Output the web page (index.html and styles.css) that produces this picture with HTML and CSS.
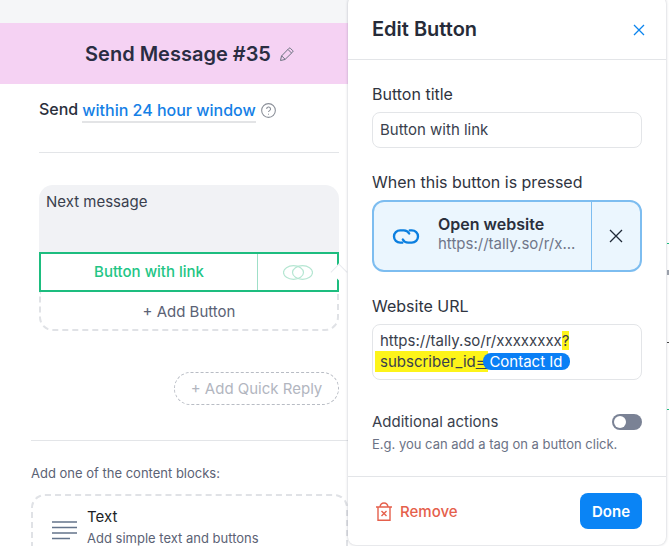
FILE: index.html
```html
<!DOCTYPE html>
<html lang="en">
<head>
<meta charset="utf-8">
<title>Edit Button</title>
<link rel="stylesheet" href="styles.css">
</head>
<body>
<div class="stage">
  <main class="builder">
    <div class="topbar"></div>
    <header class="node-head">
      <h1>Send Message #35</h1>
      <svg class="pencil" width="16" height="16" viewBox="0 0 16 16" fill="none" stroke="#6b7280" stroke-width="1"><path d="M1.500 14.500l1-4.500 7.500-7.700a1 1 0 0 1 1.400 0l2.300 2.300a1 1 0 0 1 0 1.400L6 13.500z"/><path d="M9 3.500l3.500 3.500M2.800 10l3.200 3.200"/></svg>
    </header>
    <section class="send-section">
      <div class="send-row">
        <span>Send</span>
        <span class="send-link">within 24 hour window</span>
        <svg width="15" height="15" viewBox="0 0 14 14" fill="none" stroke="#8a8f98"><circle cx="7" cy="7" r="6.400"/><path d="M5.300 5.600a1.800 1.800 0 1 1 2.700 1.500c-.6.4-1 .7-1 1.400"/><path d="M7 10v.9"/></svg>
      </div>
      <div class="rule"></div>
      <div class="msg-card">
        <div class="msg-text">Next message</div>
        <div class="msg-button">
          <div class="msg-button-title">Button with link</div>
          <div class="msg-button-icon">
            <svg width="30" height="15" viewBox="0 0 30 15" fill="none" stroke="#b5e6d2" stroke-width="1.200"><ellipse cx="10.500" cy="7.500" rx="10" ry="6.800"/><ellipse cx="19.500" cy="7.500" rx="10" ry="6.800"/></svg>
          </div>
          <span class="notch"></span>
        </div>
        <div class="add-button">+ Add Button</div>
      </div>
      <div class="quick-row"><div class="quick">+ Add Quick Reply</div></div>
    </section>
    <section class="blocks">
      <div class="blocks-label">Add one of the content blocks:</div>
      <div class="block-card">
        <svg class="block-icon" width="26" height="22" viewBox="0 0 26 22" fill="none" stroke="#64748b" stroke-width="1.600"><path d="M0 2h25M0 7.500h25M0 13h25M0 18.500h18"/></svg>
        <div>
          <div class="block-title">Text</div>
          <div class="block-sub">Add simple text and buttons</div>
        </div>
      </div>
    </section>
  </main>

  <aside class="panel">
    <div class="panel-head">
      <h2>Edit Button</h2>
      <svg width="12" height="12" viewBox="0 0 12 12" stroke="#0b84ee" stroke-width="1.300" fill="none"><path d="M1 1l10 10M11 1L1 11"/></svg>
    </div>
    <div class="panel-body">
      <label class="field-label">Button title</label>
      <div class="input">Button with link</div>
      <label class="field-label gap-when">When this button is pressed</label>
      <div class="action">
        <div class="action-icon">
          <svg width="28" height="17" viewBox="0 0 26 16" fill="none" stroke="#0b7fe0" stroke-width="2.200" stroke-linecap="round"><path d="M9.500 13.800H7.500a5.800 5.800 0 0 1 0-11.600h3.500a5.800 5.800 0 0 1 5 3"/><path d="M16.500 2.200h2a5.800 5.800 0 0 1 0 11.600H15a5.800 5.800 0 0 1-5-3"/></svg>
        </div>
        <div class="action-text">
          <div class="action-title">Open website</div>
          <div class="action-url">https://tally.so/r/x...</div>
        </div>
        <div class="action-close">
          <svg width="14" height="14" viewBox="0 0 14 14" fill="none" stroke="#1f2937" stroke-width="1.300"><path d="M1 1l12 12M13 1L1 13"/></svg>
        </div>
      </div>
      <label class="field-label gap-url">Website URL</label>
      <div class="url-box">
        <div>https://tally.so/r/xxxxxxxx<mark>?</mark></div>
        <div class="url-line2"><mark>subscriber_id<u>=&#8201;</u></mark><span class="chip">Contact Id</span></div>
      </div>
      <div class="toggle-row">
        <span>Additional actions</span>
        <span class="toggle"><i></i></span>
      </div>
      <div class="hint">E.g. you can add a tag on a button click.</div>
    </div>
    <div class="panel-foot">
      <div class="remove">
        <svg width="16" height="19" viewBox="0 0 16 19" fill="none" stroke="#e5604c" stroke-width="1.400"><path d="M0 5h16M2 5v13.300h12V5"/><path d="M4 5c.3-2.200 1.500-4 4-4s3.700 1.800 4 4"/><path d="M5.500 9l5 5M10.500 9l-5 5"/></svg>
        <span>Remove</span>
      </div>
      <div class="done">Done</div>
    </div>
  </aside>
  <span class="edge edge-a"></span>
  <span class="edge edge-b"></span>
  <span class="edge edge-c"></span>
  <span class="edge edge-d"></span>
</div>
</body>
</html>
```
FILE: styles.css
```css
* { box-sizing: border-box; }
html, body { margin: 0; padding: 0; background: #fff; }
body { font-family: Inter, "Liberation Sans", sans-serif; color: #2a2f3c; }
.stage { position: relative; width: 669px; height: 546px; overflow: hidden; background: #fff; }
.builder { width: 348px; height: 546px; overflow: hidden; }
.topbar { height: 23px; background: #f5f6f8; }
.node-head { height: 61px; background: #f5d2f3; display: flex; align-items: center; justify-content: center; gap: 8px; padding-left: 32px; }
.node-head h1 { margin: 0; font-size: 20px; font-weight: 600; color: #2a2d42; line-height: 24px; }
.send-section { padding: 0 9px 0 39px; }
.send-row { display: flex; align-items: center; gap: 4px; height: 30px; margin-top: 10px; font-size: 16px; font-weight: 500; color: #2a2f3c; }
.send-link { color: #1580e6; border-bottom: 2px solid #e3e4e6; line-height: 22px; margin-top: 3px; margin-right: 1px; }
.send-row svg { margin-top: 3px; }
.rule { height: 1px; background: #e3e5e8; margin-top: 28px; }
.msg-card { margin-top: 32px; }
.msg-text { height: 67px; background: #f1f2f5; border-radius: 14px 14px 0 0; padding: 8px 7px; font-size: 15px; line-height: 17px; color: #3a3f4d; }
.msg-button { position: relative; display: flex; height: 40px; border: 2px solid #1dbd7f; background: #fff; }
.msg-button-title { flex: 1; display: flex; align-items: center; justify-content: center; font-size: 15px; font-weight: 500; color: #22c585; padding-bottom: 1px; }
.msg-button-icon { width: 80px; border-left: 1px solid #9fdfc8; display: flex; align-items: center; justify-content: center; }
.notch { position: absolute; right: -8px; top: 12px; width: 12px; height: 12px; background: #fff; transform: rotate(45deg); border: 1px solid #e8eaee; border-width: 1px 0 0 1px; }
.add-button { height: 39px; padding-top: 2px; border: 2px dashed #e0e2e6; border-top: 0; border-radius: 0 0 14px 14px; display: flex; align-items: center; justify-content: center; font-size: 15px; color: #5b6275; }
.quick-row { display: flex; justify-content: flex-end; margin-top: 41px; }
.quick { width: 165px; height: 33px; border: 1px dashed #b8bcc4; border-radius: 17px; display: flex; align-items: center; justify-content: center; font-size: 15px; color: #b2b6bf; }
.blocks { margin: 35px 0 0 31px; border-top: 1px solid #e3e5e8; padding-top: 24px; }
.blocks-label { font-size: 13px; line-height: 17px; color: #5b6275; }
.block-card { margin-top: 12px; height: 70px; border: 2px dashed #e0e2e6; border-radius: 14px; display: flex; gap: 9px; padding: 12px 0 0 19px; }
.block-icon { margin-top: 12px; flex: none; }
.block-title { font-size: 15px; line-height: 17px; color: #1c1f26; }
.block-sub { font-size: 13px; line-height: 16px; margin-top: 5px; color: #5b6275; }

.panel { position: absolute; left: 348px; top: -4px; width: 318px; height: 549px; background: #fff; border-radius: 8px; box-shadow: 0 0 3px rgba(30,40,60,.28); display: flex; flex-direction: column; }
.panel-head { height: 64px; padding: 4px 21px 0 24px; display: flex; align-items: center; justify-content: space-between; border-bottom: 1px solid #e3e5e8; }
.panel-head h2 { margin: 0 0 2px; font-size: 20px; font-weight: 600; color: #262b38; }
.panel-body { flex: 1; padding: 24px 24px 0; }
.field-label { display: block; font-size: 16px; line-height: 20px; color: #2f3440; }
.input { margin-top: 8px; height: 36px; border: 1px solid #e3e5e8; border-radius: 8px; padding: 0 7px 2px; display: flex; align-items: center; font-size: 15px; color: #3a3f4d; }
.gap-when { margin-top: 24px; }
.action { margin-top: 8px; height: 72px; display: flex; background: #ebf6fe; border: 2px solid #7dbdf0; border-radius: 12px; }
.action-icon { width: 64px; display: flex; align-items: center; justify-content: center; }
.action-text { flex: 1; display: flex; flex-direction: column; justify-content: center; min-width: 0; padding-bottom: 5px; }
.action-title { font-size: 16px; font-weight: 600; line-height: 19px; color: #2a2f3c; }
.action-url { font-size: 15px; line-height: 19px; color: #70778a; }
.action-close { width: 49px; border-left: 1px solid #7dbdf0; display: flex; align-items: center; justify-content: center; }
.gap-url { margin-top: 24px; }
.url-box { margin-top: 8px; height: 56px; border: 1px solid #e3e5e8; border-radius: 8px; padding: 6px 7px; font-size: 15px; line-height: 20px; color: #3a3f4d; }
.url-box mark { background: #fdf41a; color: #3a3f4d; }
.url-line2 { display: flex; align-items: center; }
.url-line2 mark { line-height: 21px; margin-left: -5px; padding-left: 5px; white-space: pre; }
.chip { background: #0a7ff5; color: #fff; border-radius: 8px; line-height: 17px; padding: 0 7px 0 6px; margin-left: -5px; }
.toggle-row { margin-top: 33px; display: flex; justify-content: space-between; align-items: center; font-size: 15px; line-height: 18px; color: #3a3f4d; }
.toggle { width: 30px; height: 16px; background: #7a8295; border-radius: 8px; padding: 2px; display: block; }
.toggle i { display: block; width: 12px; height: 12px; background: #fff; border-radius: 50%; }
.hint { margin-top: 5px; font-size: 13px; line-height: 16px; color: #6b7285; }
.panel-foot { height: 69px; border-top: 1px solid #e3e5e8; display: flex; align-items: center; justify-content: space-between; padding: 0 24px 0 28px; }
.remove { display: flex; align-items: center; gap: 8px; font-size: 15px; font-weight: 500; color: #e5604c; }
.done { width: 62px; height: 36px; background: #0a84f5; color: #fff; border-radius: 8px; display: flex; align-items: center; justify-content: center; font-size: 15px; font-weight: 600; }
.edge { position: absolute; right: 0; width: 2px; height: 1px; }
.edge-a { top: 243px; background: #1dbd7f; }
.edge-b { top: 270px; background: #9aa0aa; height: 5px; }
.edge-c { top: 342px; background: #444; }
.edge-d { top: 409px; background: #1dbd7f; }
```
